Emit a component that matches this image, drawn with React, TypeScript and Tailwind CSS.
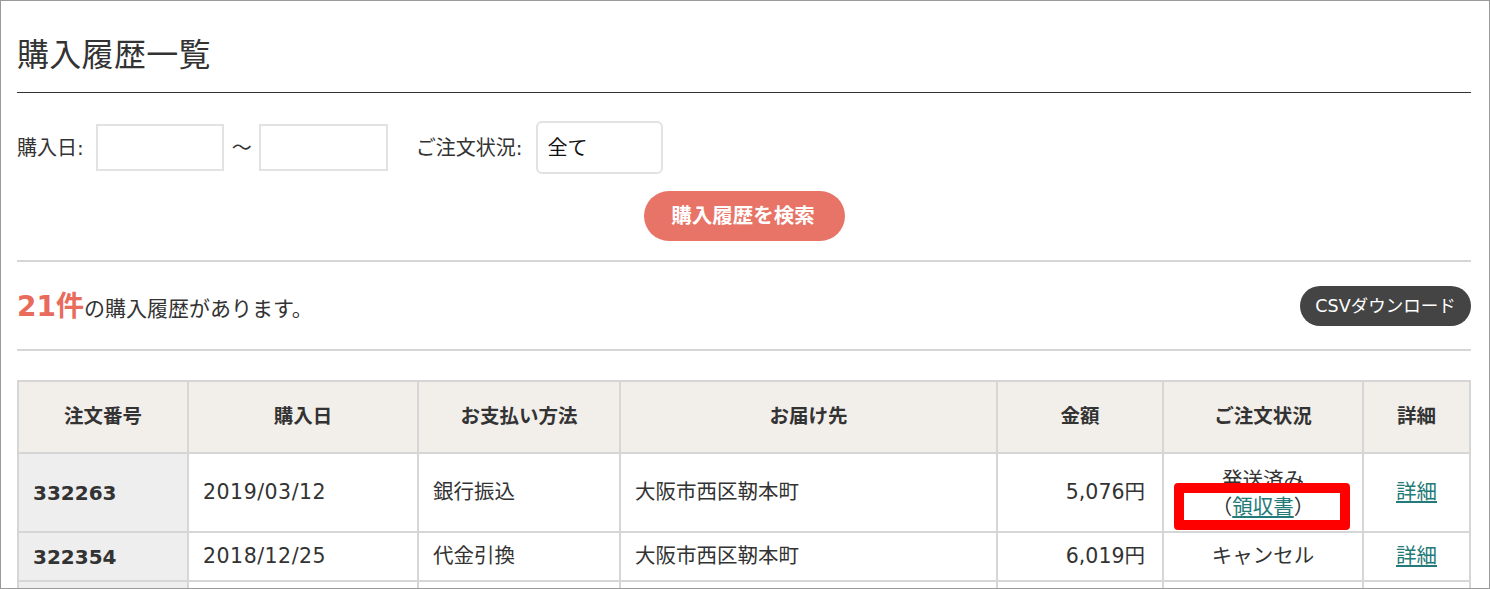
import React from "react";

const font = { fontFamily: '"DejaVu Sans", "Noto Sans CJK JP", sans-serif' };

const orders = [
  { no: "332263", date: "2019/03/12", pay: "銀行振込", dest: "大阪市西区靭本町", price: "5,076円", status: "発送済み", receipt: true },
  { no: "322354", date: "2018/12/25", pay: "代金引換", dest: "大阪市西区靭本町", price: "6,019円", status: "キャンセル", receipt: false },
  { no: "", date: "", pay: "", dest: "", price: "", status: "", receipt: false },
];

const App = () => (
  <div
    className="w-[1490px] h-[589px] border border-[#9a9a9a] bg-white overflow-hidden text-[#333] pl-[16px] pr-[18px]"
    style={font}
  >
    {/* Title */}
    <h1 className="pt-[33px] pb-[16px] text-[32px] leading-[42px] font-normal border-b border-[#333] tracking-[0.3px]">
      購入履歴一覧
    </h1>

    {/* Filters */}
    <div className="mt-[28px] flex items-center h-[53px] text-[20px]">
      <span>購入日:</span>
      <div className="ml-[12px] w-[128px] h-[47px] border-2 border-[#e2e2e2] bg-white" />
      <span className="ml-[8px] mr-[7px] text-[20px]">～</span>
      <div className="w-[129px] h-[47px] border-2 border-[#e2e2e2] bg-white" />
      <span className="ml-[28px]">ご注文状況:</span>
      <div className="ml-[13px] w-[127px] h-[53px] border-2 border-[#e2e2e2] rounded-[6px] bg-white flex items-center pl-[10px] text-[20px] text-[#111]">
        全て
      </div>
    </div>

    <div className="mt-[17px] flex justify-center">
      <button className="w-[201px] h-[50px] rounded-full bg-[#e87467] text-white font-bold text-[20.5px] pr-[2px]">
        購入履歴を検索
      </button>
    </div>

    {/* Count row */}
    <div className="mt-[19px] border-t-2 border-b-2 border-[#d6d6d6] h-[91px] flex items-center justify-between">
      <p className="text-[21px] pt-[2px]">
        <span className="text-[#e86b5c] font-bold text-[28px]">21件</span>の購入履歴があります。
      </p>
      <button className="w-[171px] h-[40px] mt-[1px] rounded-full bg-[#444] text-white text-[17.5px]">
        CSVダウンロード
      </button>
    </div>

    {/* Table */}
    <table className="mt-[29px] w-[1452px] border-collapse border-2 border-[#d6d6d6] text-[20.5px] table-fixed">
      <colgroup>
        <col className="w-[170px]" />
        <col className="w-[230px]" />
        <col className="w-[202px]" />
        <col className="w-[377px]" />
        <col className="w-[166px]" />
        <col className="w-[200px]" />
        <col className="w-[107px]" />
      </colgroup>
      <thead>
        <tr className="h-[72px] bg-[#f2eeea] text-[19.5px]">
          {["注文番号", "購入日", "お支払い方法", "お届け先", "金額", "ご注文状況", "詳細"].map((h) => (
            <th key={h} className="border-2 border-[#d6d6d6] font-bold text-center">
              {h}
            </th>
          ))}
        </tr>
      </thead>
      <tbody>
        {orders.map((o, i) => (
          <tr key={i} className={i === 0 ? "h-[79px]" : "h-[49px]"}>
            <td className="border-2 border-[#d6d6d6] bg-[#eeeeee] pl-[14px] font-bold text-[20px]">{o.no}</td>
            <td className="border-2 border-[#d6d6d6] pl-[14px] tracking-[0.5px]">{o.date}</td>
            <td className="border-2 border-[#d6d6d6] pl-[14px]">{o.pay}</td>
            <td className="border-2 border-[#d6d6d6] pl-[14px]">{o.dest}</td>
            <td className="border-2 border-[#d6d6d6] text-right pr-[17px]">{o.price}</td>
            <td className="border-2 border-[#d6d6d6] text-center leading-[27px] relative">
              <div className={o.receipt ? "pt-[3px]" : ""}>{o.status}</div>
              {o.receipt && (
                <>
                  <div>
                    （<a className="text-[#247a78] underline underline-offset-2">領収書</a>）
                  </div>
                  {/* annotation highlight */}
                  <div className="absolute left-[10px] top-[29px] w-[176px] h-[47px] border-[10px] border-[#ff0000] rounded-[4px]" />
                </>
              )}
            </td>
            <td className="border-2 border-[#d6d6d6] text-center">
              {o.no && <a className="text-[#247a78] underline underline-offset-2">詳細</a>}
            </td>
          </tr>
        ))}
      </tbody>
    </table>
  </div>
);

export default App;
